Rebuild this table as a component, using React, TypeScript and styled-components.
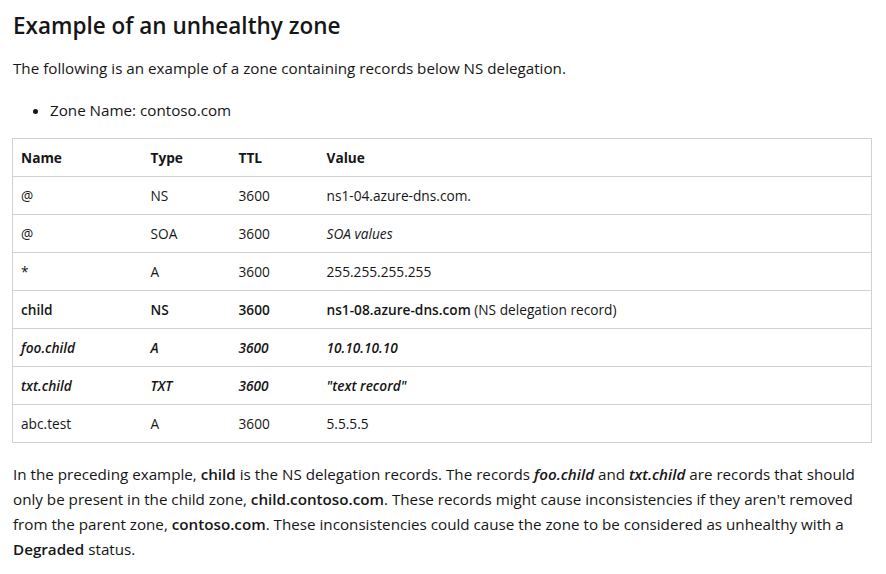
import React from "react";
import styled, { createGlobalStyle } from "styled-components";

const Global = createGlobalStyle`
  html, body { margin: 0; padding: 0; background: #ffffff; }
  body {
    font-family: "Segoe UI", "Open Sans", "Noto Sans", sans-serif;
    color: #161616;
  }
  *, *::before, *::after { box-sizing: border-box; }
  strong { font-weight: 600; }
`;

const Page = styled.main`
  padding: 0 14px 0 13px;
  font-size: 15px;
`;

const Heading = styled.h2`
  font-size: 22.5px;
  font-weight: 600;
  margin: 9px 0 0;
  line-height: 34px;
`;

const Para = styled.p`
  font-size: 15.2px;
  line-height: 25px;
  margin: 0;
`;

const Intro = styled(Para)`
  margin-top: 13px;
`;

const List = styled.ul`
  margin: 17px 0 0;
  padding-left: 37px;
  font-size: 15.2px;
  line-height: 25px;
`;

const Table = styled.table`
  margin-top: 15px;
  width: 860px;
  margin-left: -1px;
  border-collapse: collapse;
  border: 1px solid #d1d1d1;
  font-size: 13.7px;
  table-layout: fixed;
`;

const Th = styled.th<{ $w?: number }>`
  text-align: left;
  font-weight: 700;
  padding: 0 8px;
  height: 38px;
  border-bottom: 1px solid #d1d1d1;
  width: ${(p) => (p.$w ? `${p.$w}px` : "auto")};
`;

const Td = styled.td<{ $strong?: boolean; $em?: boolean }>`
  padding: 0 8px;
  height: 38px;
  border-bottom: 1px solid #d1d1d1;
  font-weight: ${(p) => (p.$strong ? 600 : 400)};
  font-style: ${(p) => (p.$em ? "italic" : "normal")};
`;

const Outro = styled(Para)`
  margin-top: 19px;
`;

type Row = {
  name: string;
  type: string;
  ttl: string;
  value: React.ReactNode;
  strong?: boolean;
  em?: boolean;
};

const rows: Row[] = [
  { name: "@", type: "NS", ttl: "3600", value: "ns1-04.azure-dns.com." },
  { name: "@", type: "SOA", ttl: "3600", value: <em>SOA values</em> },
  { name: "*", type: "A", ttl: "3600", value: "255.255.255.255" },
  {
    name: "child",
    type: "NS",
    ttl: "3600",
    value: (
      <>
        <strong>ns1-08.azure-dns.com</strong> (NS delegation record)
      </>
    ),
  },
  { name: "foo.child", type: "A", ttl: "3600", value: "10.10.10.10", strong: true, em: true },
  { name: "txt.child", type: "TXT", ttl: "3600", value: '"text record"', strong: true, em: true },
  { name: "abc.test", type: "A", ttl: "3600", value: "5.5.5.5" },
];

export default function App() {
  return (
    <Page>
      <Global />
      <Heading>Example of an unhealthy zone</Heading>
      <Intro>The following is an example of a zone containing records below NS delegation.</Intro>
      <List>
        <li>Zone Name: contoso.com</li>
      </List>
      <Table>
        <thead>
          <tr>
            <Th $w={130}>Name</Th>
            <Th $w={88}>Type</Th>
            <Th $w={88}>TTL</Th>
            <Th>Value</Th>
          </tr>
        </thead>
        <tbody>
          {rows.map((r, i) => {
            const bold = r.strong || r.name === "child";
            return (
              <tr key={i}>
                <Td $strong={bold} $em={r.em}>{r.name}</Td>
                <Td $strong={bold} $em={r.em}>{r.type}</Td>
                <Td $strong={bold} $em={r.em}>{r.ttl}</Td>
                <Td $strong={r.strong} $em={r.em}>{r.value}</Td>
              </tr>
            );
          })}
        </tbody>
      </Table>
      <Outro>
        In the preceding example, <strong>child</strong> is the NS delegation records. The records{" "}
        <strong><em>foo.child</em></strong> and <strong><em>txt.child</em></strong> are records that should
        only be present in the child zone, <strong>child.contoso.com</strong>. These records might cause
        inconsistencies if they aren't removed from the parent zone, <strong>contoso.com</strong>. These
        inconsistencies could cause the zone to be considered as unhealthy with a <strong>Degraded</strong>{" "}
        status.
      </Outro>
    </Page>
  );
}
